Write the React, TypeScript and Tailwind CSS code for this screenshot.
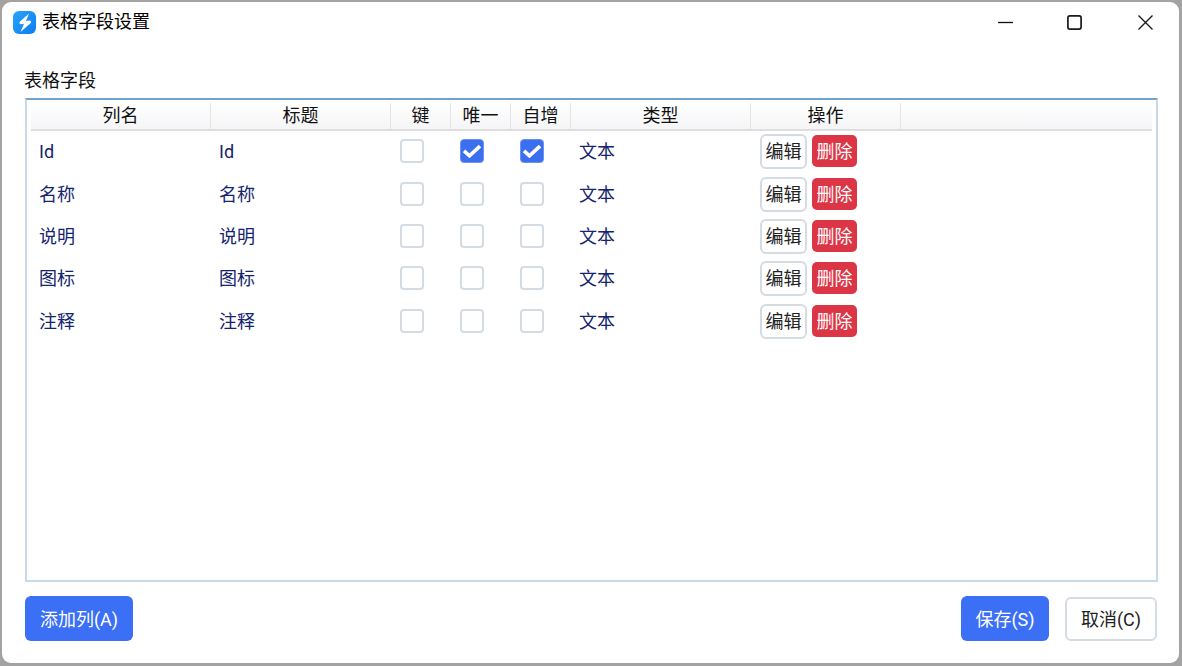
import React from 'react';

const rows = [
  { name: 'Id', title: 'Id', key: false, unique: true, auto: true, top: '' },
  { name: '名称', title: '名称', key: false, unique: false, auto: false, top: 'mt-px' },
  { name: '说明', title: '说明', key: false, unique: false, auto: false, top: '' },
  { name: '图标', title: '图标', key: false, unique: false, auto: false, top: '' },
  { name: '注释', title: '注释', key: false, unique: false, auto: false, top: 'mt-px' },
];

const headers = [
  { label: '列名', width: 'w-[180px]' },
  { label: '标题', width: 'w-[180px]' },
  { label: '键', width: 'w-[60px]' },
  { label: '唯一', width: 'w-[60px]' },
  { label: '自增', width: 'w-[60px]' },
  { label: '类型', width: 'w-[180px]' },
  { label: '操作', width: 'w-[150px]' },
];

function Box({ checked }: { checked: boolean }) {
  return (
    <div className="w-[60px] pl-[9px]">
      {checked ? (
        <div className="w-6 h-6 rounded-[4px] bg-[#3b6ff0] border border-[#6b93f2] flex items-center justify-center">
          <svg width="20" height="14" viewBox="0 0 20 14" fill="none">
            <path d="M2 6.8 L7.5 11.8 L18 2.2" stroke="#ffffff" strokeWidth="3.6" />
          </svg>
        </div>
      ) : (
        <div className="w-6 h-6 rounded-[4px] bg-white border-2 border-[#d5dbe3]" />
      )}
    </div>
  );
}

export default function App() {
  return (
    <div className="w-[1182px] h-[666px] bg-[#a3a3a3] pt-[2px] pl-[2px] pr-[3px] pb-[3px] font-['Roboto','Noto_Sans_CJK_SC',sans-serif] text-[18px] leading-[24px] overflow-hidden">
      <div className="w-full h-full bg-white rounded-[9px] flex flex-col">
        <div className="h-[42px] pb-[2px] flex items-center pl-[11px] shrink-0">
          <div className="w-[23px] h-[23px] rounded-[6px] bg-gradient-to-br from-[#2ba4f8] to-[#0b7cf2]">
            <svg width="23" height="23" viewBox="0 0 23 23">
              <path
                d="M16 2.5 L6.5 11 Q6 13.2 8 13.2 L11 12.8 L7.5 21 L18 11.8 Q18.5 9.6 16.5 9.6 L13 10 Z"
                fill="#ffffff"
              />
            </svg>
          </div>
          <span className="ml-[6px] text-black">表格字段设置</span>
          <div className="ml-auto pr-[26px] pt-px flex items-center">
            <svg width="15" height="15" viewBox="0 0 15 15" fill="none">
              <path d="M0 7.5 H15" stroke="#111111" strokeWidth="1.3" />
            </svg>
            <svg className="ml-[54px]" width="15" height="15" viewBox="0 0 15 15" fill="none">
              <rect x="0.9" y="0.9" width="13.2" height="13.2" rx="2" stroke="#1a1a1a" strokeWidth="1.7" />
            </svg>
            <svg className="ml-[56px]" width="15" height="15" viewBox="0 0 15 15" fill="none">
              <path d="M0.5 0.5 L14.5 14.5 M14.5 0.5 L0.5 14.5" stroke="#1a1a1a" strokeWidth="1.4" />
            </svg>
          </div>
        </div>

        <div className="flex-1 flex flex-col pl-[23px] pr-[21px] pt-[24px] pb-[22px] min-h-0">
          <div className="h-[24px] text-[#111] leading-[24px] -ml-px mt-px -mb-px">表格字段</div>
          <div className="mt-[6px] h-[484px] border-2 border-[#c9d9e6] border-t-[#6da3cc] bg-white pt-[3px] px-[4px]">
            <div className="flex h-[28px] border-b-2 border-[#dfdfdf] bg-gradient-to-b from-white to-[#f5f5f7] -mb-px">
              {headers.map((h) => (
                <div
                  key={h.label}
                  className={`${h.width} border-r border-[#e4e4e4] flex items-center justify-center text-[#111]`}
                >
                  {h.label}
                </div>
              ))}
            </div>
            {rows.map((r) => (
              <div key={r.name} className={`${r.top} flex items-center h-[42px] text-[#14246e]`}>
                <div className="w-[180px] pl-[8px] h-[26px] pt-[2px]">{r.name}</div>
                <div className="w-[180px] pl-[8px] h-[26px] pt-[2px]">{r.title}</div>
                <Box checked={r.key} />
                <Box checked={r.unique} />
                <Box checked={r.auto} />
                <div className="w-[180px] pl-[8px] h-[26px] pt-[2px]">文本</div>
                <div className="pl-[9px] flex items-center gap-[5px]">
                  <button className="w-[47px] h-[35px] pt-[2px] rounded-[6px] border-2 border-[#d5dbe3] bg-white text-[#222] flex items-center justify-center">
                    编辑
                  </button>
                  <button className="w-[45px] h-[32px] pt-[2px] rounded-[5px] bg-[#dc3545] text-white flex items-center justify-center">
                    删除
                  </button>
                </div>
              </div>
            ))}
          </div>
          <div className="mt-[14px] flex items-end">
            <button className="w-[108px] h-[45px] pt-[2px] rounded-[6px] bg-[#3b6ff5] text-white flex items-center justify-center">
              添加列(A)
            </button>
            <button className="ml-auto w-[88px] h-[45px] pt-[2px] rounded-[6px] bg-[#3b6ff5] text-white flex items-center justify-center">
              保存(S)
            </button>
            <button className="ml-[16px] mr-px w-[92px] h-[44px] pt-[2px] rounded-[6px] border-2 border-[#d5dbe3] bg-white text-[#222] flex items-center justify-center">
              取消(C)
            </button>
          </div>
        </div>
      </div>
    </div>
  );
}
